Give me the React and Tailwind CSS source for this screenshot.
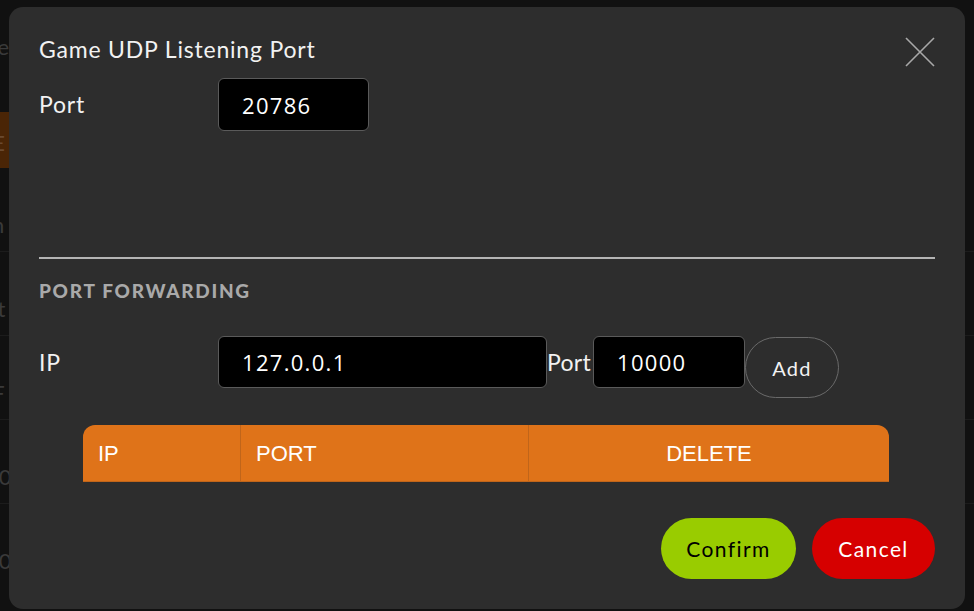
import React from 'react';

const rounded = { fontFamily: 'Lato, "Noto Sans", sans-serif' };

const BackgroundPage = () => (
  <div className="flex flex-col pt-[30px] text-[22px] text-[#3a3a3a]" style={rounded}>
    <div className="h-[82px] -ml-[14px]">Fe</div>
    <div className="h-[56px] w-[200px] bg-[#4a2506] text-[#6a4a30] -ml-[14px] pt-[14px]">IE</div>
    <div className="h-[84px] border-b border-[#1c1c1c] -ml-[14px] pt-[40px]">In</div>
    <div className="h-[84px] border-b border-[#1c1c1c] -ml-[14px] pt-[40px]">St</div>
    <div className="h-[84px] border-b border-[#1c1c1c] -ml-[14px] pt-[40px]">IF</div>
    <div className="h-[84px] border-b border-[#1c1c1c] -ml-[14px] pt-[40px]">10</div>
    <div className="h-[84px] -ml-[14px] pt-[40px]">10</div>
  </div>
);

const TextBox = ({ value, width }) => (
  <input
    readOnly
    value={value}
    className={`${width} h-[52px] rounded-[6px] border border-[#5a5a5a] bg-black pl-[23px] text-[22px] tracking-[1.3px] text-white outline-none`}
    style={{ fontFamily: '"Open Sans", "Noto Sans", sans-serif' }}
  />
);

const CloseIcon = () => (
  <svg width="30" height="30" viewBox="0 0 30 30" className="mt-[3px]">
    <path d="M1 1 L29 29 M29 1 L1 29" stroke="#a8a8a8" strokeWidth="1.6" fill="none" />
  </svg>
);

export default function App() {
  return (
    <div className="relative h-[611px] w-[974px] overflow-hidden bg-[#111111]">
      <BackgroundPage />

      <div className="absolute inset-0 pl-[9px] pt-[7px]">
        <div
          className="flex h-[602px] w-[956px] flex-col rounded-[14px] bg-[#2d2d2d] pl-[30px] pr-[30px] pt-[27px] text-[#f2f2f2]"
          style={rounded}
        >
          <div className="flex h-[30px] items-start justify-between">
            <h2 className="text-[23px] leading-[30px] tracking-[0.8px]">Game UDP Listening Port</h2>
            <CloseIcon />
          </div>

          <div className="mt-[14px] flex items-center">
            <span className="w-[179px] text-[23px] tracking-[0.8px]">Port</span>
            <TextBox value="20786" width="w-[151px] h-[53px]" />
          </div>

          <div className="mt-[126px] h-[2px] w-full bg-[#b4b4b4]" />

          <div className="mt-[20px] text-[19px] font-black leading-[24px] tracking-[1.7px] text-[#a9a9a9]">
            PORT FORWARDING
          </div>

          <div className="mt-[33px] flex items-start">
            <span className="w-[179px] text-[23px] leading-[52px] tracking-[0.8px]">IP</span>
            <TextBox value="127.0.0.1" width="w-[329px]" />
            <span className="w-[46px] text-[23px] leading-[52px] tracking-[0.3px]">Port</span>
            <TextBox value="10000" width="w-[152px]" />
            <button className="mt-[1px] h-[61px] w-[94px] rounded-full border border-[#6a6a6a] text-[20px] tracking-[1.2px] text-[#f2f2f2]">
              Add
            </button>
          </div>

          <div
            className="ml-[44px] mt-[27px] flex h-[57px] w-[806px] rounded-t-[12px] border-b border-[#c0651a] bg-[#df7319] text-[22px] text-white"
            style={{ fontFamily: '"Liberation Sans", Arial, sans-serif' }}
          >
            <div className="flex w-[158px] items-center border-r border-[#c0651a] pl-[15px]">IP</div>
            <div className="flex w-[288px] items-center border-r border-[#c0651a] pl-[15px]">PORT</div>
            <div className="flex flex-1 items-center justify-center">DELETE</div>
          </div>

          <div className="mt-[36px] flex justify-end gap-[16px]">
            <button className="h-[61px] w-[135px] rounded-full bg-[#99cc00] text-[21px] tracking-[1.4px] text-black">
              Confirm
            </button>
            <button className="h-[61px] w-[123px] rounded-full bg-[#d60000] text-[21px] tracking-[1.4px] text-white">
              Cancel
            </button>
          </div>
        </div>
      </div>
    </div>
  );
}
